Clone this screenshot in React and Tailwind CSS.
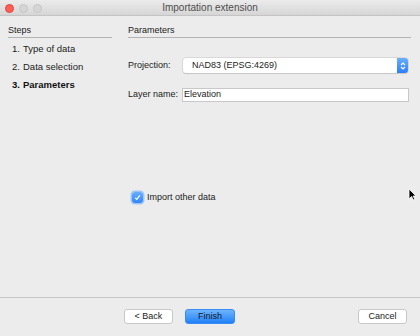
import React from "react";

const font = { fontFamily: '"Liberation Sans", Arial, sans-serif' };

const TitleBar = () => (
  <div className="relative flex h-4 items-center justify-center border-b border-[#c4c4c4] bg-gradient-to-b from-[#ebebeb] to-[#d6d6d6]">
    <div className="absolute left-[5px] top-[4px] flex gap-[5px]">
      <span className="h-[9px] w-[9px] rounded-full bg-[#fc5f57] border border-[#e2463f]" />
      <span className="h-[9px] w-[9px] rounded-full bg-[#d5d5d5] border border-[#c6c6c6]" />
      <span className="h-[9px] w-[9px] rounded-full bg-[#d5d5d5] border border-[#c6c6c6]" />
    </div>
    <span className="text-[10px] text-[#4d4d4d]">Importation extension</span>
  </div>
);

const Header = ({ children }) => (
  <div className="border-b border-[#b3b3b3] pt-[7px] text-[9px] leading-[14px] text-[#222]">
    {children}
  </div>
);

const steps = ["Type of data", "Data selection", "Parameters"];

const App = () => {
  return (
    <div className="h-[336px] w-[420px] overflow-hidden bg-[#ececec] text-[#222]" style={font}>
      <TitleBar />
      <div className="relative flex h-[281px]">
        <div className="w-[113px] pl-2 pr-[1px]">
          <Header>Steps</Header>
          <div className="mt-[2px] flex flex-col pl-1">
            {steps.map((s, i) => (
              <div
                key={s}
                className={`flex h-[18px] items-center text-[9.5px] ${i === 2 ? "font-bold text-[#111]" : ""}`}
              >
                <span className="w-[11px]">{i + 1}.</span>
                <span>{s}</span>
              </div>
            ))}
          </div>
        </div>
        <div className="ml-[15px] w-[283px]">
          <Header>Parameters</Header>
          <div className="mt-[20px] flex items-center">
            <span className="w-[55px] text-[9px]">Projection:</span>
            <div className="flex h-[15px] flex-1 items-center rounded-[3px] bg-white shadow-[0_0_0_0.5px_#c4c4c4,0_1px_1px_rgba(0,0,0,0.15)]">
              <span className="flex-1 pl-[9px] text-[9px]">NAD83 (EPSG:4269)</span>
              <div className="flex h-full w-[11px] flex-col items-center justify-center rounded-r-[3px] bg-gradient-to-b from-[#6aaefc] to-[#2a7ff6]">
                <svg width="6" height="10" viewBox="0 0 6 10" fill="none" stroke="white" strokeWidth="1.1">
                  <path d="M1 4 L3 2 L5 4" />
                  <path d="M1 6 L3 8 L5 6" />
                </svg>
              </div>
            </div>
            <span className="w-[3px]" />
          </div>
          <div className="mt-[15px] flex items-center">
            <span className="w-[54px] text-[9px]">Layer name:</span>
            <div className="flex h-[14px] flex-1 items-center border border-[#c8c8c8] bg-white pl-[1px] text-[9px]">
              Elevation
            </div>
            <span className="w-[2px]" />
          </div>
          <div className="ml-[4px] mt-[89px] flex items-center gap-[4px]">
            <span className="flex h-[11px] w-[11px] items-center justify-center rounded-[3px] bg-gradient-to-b from-[#69adfb] to-[#2f86f7] shadow-[0_0_0_1.5px_#9cc6fb]">
              <svg width="7" height="7" viewBox="0 0 7 7" fill="none" stroke="white" strokeWidth="1.2">
                <path d="M1.2 3.8 L2.8 5.4 L5.8 1.4" />
              </svg>
            </span>
            <span className="text-[9px]">Import other data</span>
          </div>
        </div>
        <svg className="absolute left-[408px] top-[172px]" width="9" height="13" viewBox="0 0 9 13">
          <path d="M1 1 L1 11 L3.5 8.5 L5.5 12 L7 11.3 L5 8 L8 8 Z" fill="black" stroke="white" strokeWidth="0.8" />
        </svg>
      </div>
      <div className="border-t border-[#c6c6c6]" />
      <div className="flex pt-[11px]">
        <div className="ml-[124px] flex gap-[12px]">
          <button className="h-[15px] w-[49px] rounded-[3px] border border-[#c8c8c8] bg-white text-[9px] leading-none">
            &lt; Back
          </button>
          <button className="h-[15px] w-[50px] rounded-[3px] border border-[#3a8cf5] bg-gradient-to-b from-[#6cb3fb] to-[#1e80f8] text-[9px] leading-none text-[#0e1a30]">
            Finish
          </button>
        </div>
        <button className="ml-auto mr-[13px] h-[15px] w-[49px] rounded-[3px] border border-[#c8c8c8] bg-white text-[9px] leading-none">
          Cancel
        </button>
      </div>
    </div>
  );
};

export default App;
